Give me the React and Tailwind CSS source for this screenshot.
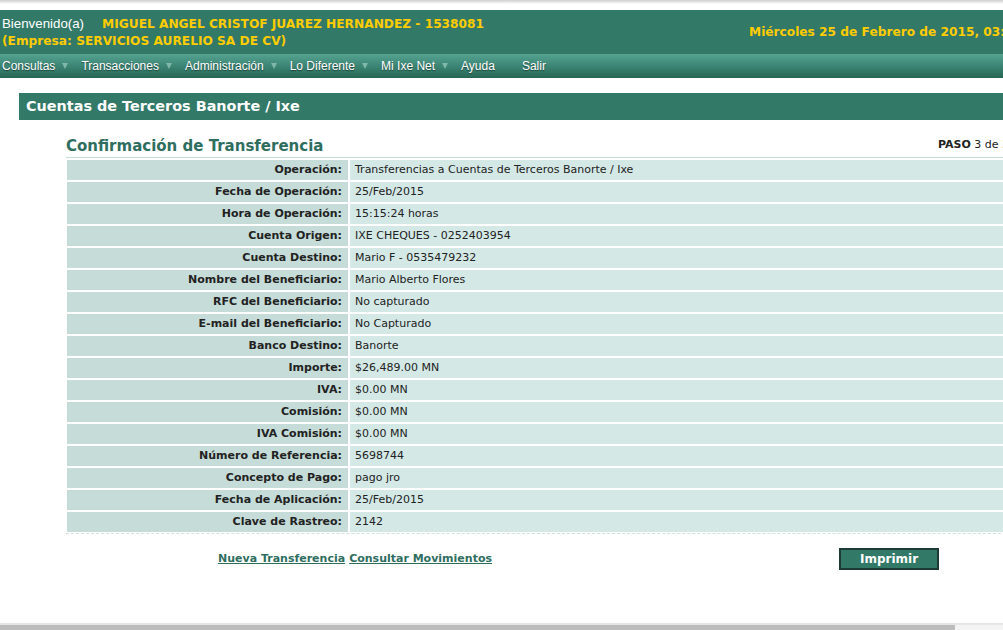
const rows = [
  ['Operación:', 'Transferencias a Cuentas de Terceros Banorte / Ixe'],
  ['Fecha de Operación:', '25/Feb/2015'],
  ['Hora de Operación:', '15:15:24 horas'],
  ['Cuenta Origen:', 'IXE CHEQUES - 0252403954'],
  ['Cuenta Destino:', 'Mario F - 0535479232'],
  ['Nombre del Beneficiario:', 'Mario Alberto Flores'],
  ['RFC del Beneficiario:', 'No capturado'],
  ['E-mail del Beneficiario:', 'No Capturado'],
  ['Banco Destino:', 'Banorte'],
  ['Importe:', '$26,489.00 MN'],
  ['IVA:', '$0.00 MN'],
  ['Comisión:', '$0.00 MN'],
  ['IVA Comisión:', '$0.00 MN'],
  ['Número de Referencia:', '5698744'],
  ['Concepto de Pago:', 'pago jro'],
  ['Fecha de Aplicación:', '25/Feb/2015'],
  ['Clave de Rastreo:', '2142'],
]

const menu = ['Consultas', 'Transacciones', 'Administración', 'Lo Diferente', 'Mi Ixe Net']

const verdana = "font-['DejaVu_Sans',Verdana,sans-serif]"

export default function App() {
  return (
    <div className="relative flex h-[630px] w-[1003px] flex-col overflow-hidden bg-white">
      {/* browser top edge */}
      <div className="h-[4px] bg-gradient-to-b from-[#cfcfcf] to-white" />
      <div className="h-[6px]" />

      {/* header */}
      <div className="flex h-[44px] items-center overflow-hidden bg-[#337968]">
        <div className="flex w-[748px] shrink-0 flex-col pl-[2px] leading-[17px]">
          <div className="flex items-baseline whitespace-nowrap">
            <span className="font-['Liberation_Sans',Arial,sans-serif] text-[13.3px] text-white">Bienvenido(a)</span>
            <span className={`${verdana} ml-[18px] text-[12.2px] font-bold text-[#ffcc00]`}>
              MIGUEL ANGEL CRISTOF JUAREZ HERNANDEZ - 1538081
            </span>
          </div>
          <span className={`${verdana} whitespace-nowrap text-[12.2px] font-bold text-[#ffcc00]`}>
            (Empresa: SERVICIOS AURELIO SA DE CV)
          </span>
        </div>
        <span className={`${verdana} ml-[1px] shrink-0 whitespace-nowrap text-[12.2px] font-bold text-[#ffcc00]`}>
          Miércoles 25 de Febrero de 2015, 03:15 p.m.
        </span>
      </div>

      {/* nav */}
      <div className="flex h-[24px] items-center bg-gradient-to-b from-[#55a391] via-[#3c8574] to-[#276654] pl-[2px] font-['Liberation_Sans',Arial,sans-serif] text-[12px] text-white [text-shadow:0_1px_1px_rgba(0,0,0,0.45)]">
        {menu.map((item) => (
          <span key={item} className="flex items-center">
            <span>{item}</span>
            <span className="ml-[7px] mr-[13px] h-0 w-0 border-x-[3.5px] border-t-[6px] border-x-transparent border-t-[#7fb7a9]" />
          </span>
        ))}
        <span>Ayuda</span>
        <span className="ml-[27px]">Salir</span>
      </div>

      {/* section bar */}
      <div className={`${verdana} ml-[19px] mt-[15px] flex h-[27px] items-center bg-[#337968] pl-[7px] text-[14.4px] font-bold text-white`}>
        Cuentas de Terceros Banorte / Ixe
      </div>

      {/* content */}
      <div className={`${verdana} ml-[66px] w-[1000px] text-[11px] text-[#222]`}>
        <div className="flex h-[38px] items-end justify-between border-b border-[#c3dcd6] pb-[1px]">
          <span className="text-[15px] font-bold leading-[20px] text-[#2f6e5f]">Confirmación de Transferencia</span>
          <span className="mr-[57px] pb-[3px]">
            <b>PASO</b> 3 de 3
          </span>
        </div>

        <div className="flex flex-col gap-[2px] border-b border-dashed border-[#cfe3df] pb-[1px] pl-[1px] pt-[2px]">
          {rows.map(([label, value]) => (
            <div key={label} className="flex h-[20px] gap-[2px]">
              <div className="flex w-[281px] items-center justify-end bg-[#c5dcd8] pr-[6px] font-bold">{label}</div>
              <div className="flex flex-1 items-center bg-[#d4e9e6] pl-[5px]">{value}</div>
            </div>
          ))}
        </div>

        <div className="mt-[14px] flex items-center">
          <div className="ml-[152px] flex gap-[4px] font-bold text-[#2f6e5f]">
            <a className="underline" href="#">Nueva Transferencia</a>
            <a className="underline" href="#">Consultar Movimientos</a>
          </div>
          <button
            type="button"
            className="ml-[347px] h-[22px] w-[100px] border-2 border-[#1d3b34] bg-[#337968] text-[12px] font-bold text-white"
          >
            Imprimir
          </button>
        </div>
      </div>

      <div className="flex-1" />
      {/* bottom scrollbar */}
      <div className="h-[7px] border-t-2 border-[#e6e6e6] bg-[#f4f4f4]">
        <div className="h-full w-[955px] bg-[#bdbdbd]" />
      </div>
    </div>
  )
}
